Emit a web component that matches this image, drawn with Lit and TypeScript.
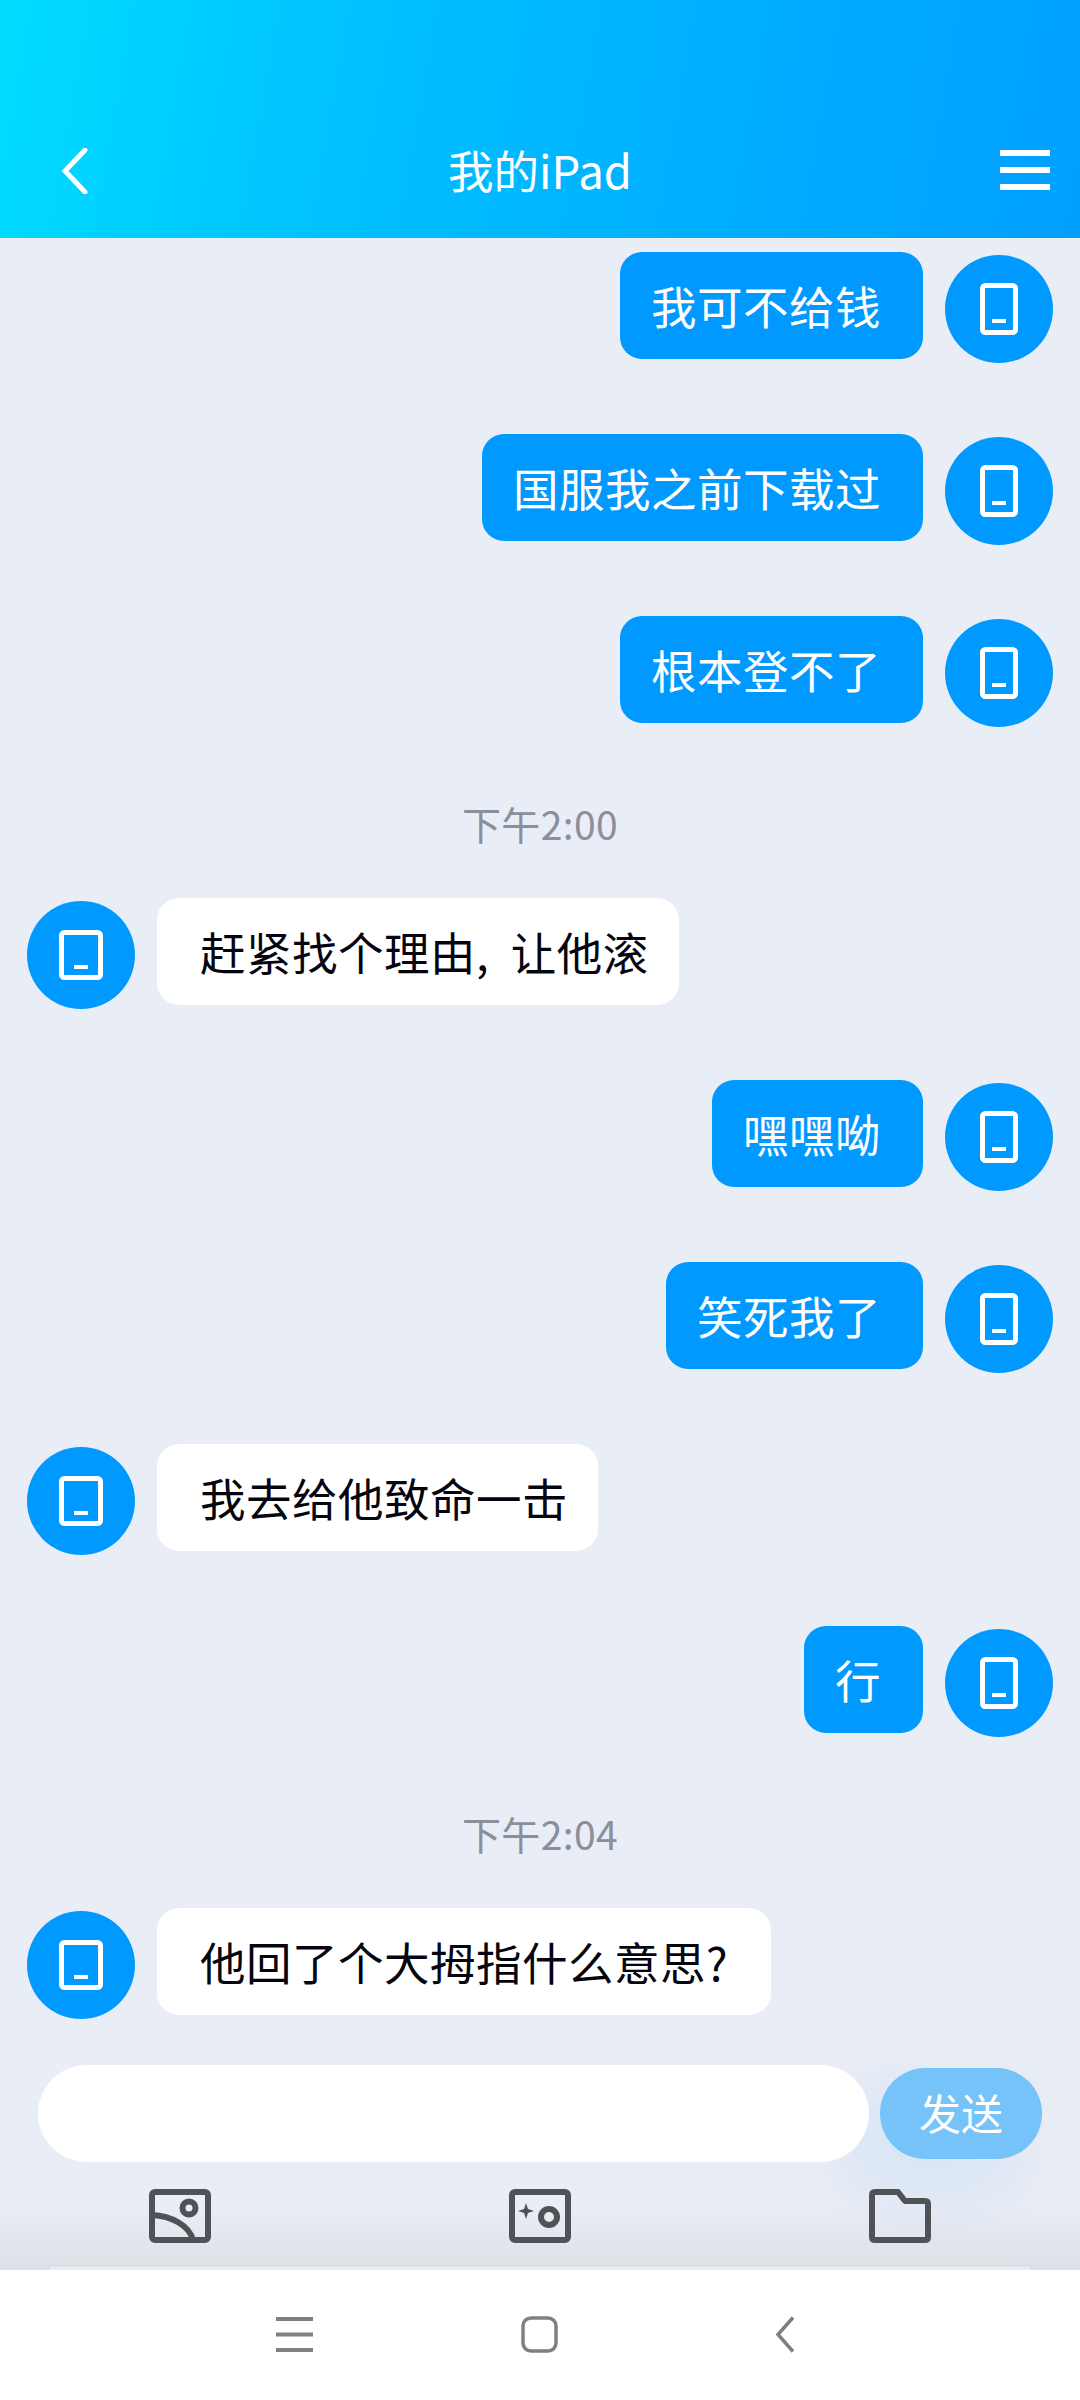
import { LitElement, html, css, svg } from "lit";
import { customElement } from "lit/decorators.js";

type Item = { t: "time" | "me" | "them"; text: string; wide?: number; extra?: number };
const items: Item[] = [
  { t: "me", text: "我可不给钱" },
  { t: "me", text: "国服我之前下载过" },
  { t: "me", text: "根本登不了" },
  { t: "time", text: "下午2:00" },
  { t: "them", text: "赶紧找个理由, 让他滚", wide: 11 },
  { t: "me", text: "嘿嘿呦" },
  { t: "me", text: "笑死我了" },
  { t: "them", text: "我去给他致命一击" },
  { t: "me", text: "行" },
  { t: "time", text: "下午2:04" },
  { t: "them", text: "他回了个大拇指什么意思?", extra: 13 },
];

const phone = svg`<rect x="2.5" y="2.5" width="33" height="47" rx="3" fill="none" stroke="#fff" stroke-width="5"/><rect x="12" y="36" width="14" height="4" fill="#fff"/>`;
const tablet = svg`<rect x="2.5" y="2.5" width="39" height="45" rx="3" fill="none" stroke="#fff" stroke-width="5"/><rect x="15" y="35" width="14" height="4" fill="#fff"/>`;

@customElement("app-root")
export class AppRoot extends LitElement {
  static styles = css`
    :host { display: flex; flex-direction: column; width: 1080px; height: 2400px; background: #e9edf5; overflow: hidden;
      font-family: "Noto Sans CJK SC", "Noto Sans", sans-serif; }
    .head { height: 238px; box-sizing: border-box; padding: 148px 30px 0 61px; display: flex; justify-content: space-between; align-items: flex-start;
      background: linear-gradient(100deg, #00dcff 0%, #00bcff 40%, #009fff 100%); position: relative; flex: none; }
    .title { position: absolute; left: 0; right: 0; top: 139px; text-align: center; color: #fff; font-size: 45.5px; line-height: 60px; }
    .back { width: 28px; height: 46px; display: block; }
    .menu { width: 50px; height: 42px; display: block; }
    .list { flex: 1; min-height: 0; padding: 14px 27px 0; overflow: hidden; }
    .row { display: flex; gap: 22px; align-items: flex-start; margin-bottom: 71px; }
    .row.me { justify-content: flex-end; }
    .avatar { width: 108px; height: 108px; margin-top: 3px; border-radius: 50%; background: #0099ff; display: flex; align-items: center; justify-content: center; flex: none; }
    .bubble { height: 107px; box-sizing: border-box; border-radius: 22px; font-size: 45.5px; letter-spacing: .5px; line-height: 107px; white-space: nowrap; }
    .me .bubble { background: #0099ff; color: #fff; padding: 0 42px 0 31px; }
    .them .bubble { background: #fff; color: #05050f; padding: 0 30px 0 43px; }
    .time { height: 57px; margin-bottom: 43px; text-align: center; color: #8a8f9c; font-size: 39px; line-height: 51px; letter-spacing: .4px; }
    .composer { flex: none; height: 205px; box-sizing: border-box; padding: 0 38px; display: grid; grid-template-columns: 831px 162px; column-gap: 11px; align-content: start; align-items: center; position: relative;
      background: linear-gradient(180deg, #e9edf5 0%, #e9edf5 70%, #dde0e7 97%); }
    .composer::after { content: ""; position: absolute; left: 50px; right: 50px; bottom: 0; height: 3px; background: #eaecf0; }
    .input { height: 97px; border-radius: 49px; background: #fff; position: relative; z-index: 1; }
    .send { height: 91px; border-radius: 46px; background: #75c3f8; color: #fff; font-size: 42px; text-align: center; line-height: 88px;
      box-shadow: -30px 30px 60px 10px rgba(0, 140, 255, .07); }
    .tools { grid-column: 1 / -1; display: flex; justify-content: space-between; padding: 27px 111px 0; }
    .tools svg { width: 62px; height: 54px; display: block; }
    .nav { flex: none; height: 130px; background: #fff; padding-top: 46px; box-sizing: border-box; }
    .navrow { display: flex; margin-left: 276px; align-items: center; }
    .n1 { width: 37px; height: 37px; display: block; }
    .n2 { width: 37px; height: 37px; display: block; margin-left: 208px; }
    .n3 { width: 20px; height: 37px; display: block; margin-left: 217px; }
  `;

  private msg(it: Item) {
    if (it.t === "time") return html`<div class="time">${it.text}</div>`;
    const av = html`<div class="avatar">
      ${it.t === "me"
        ? html`<svg width="38" height="52" viewBox="0 0 38 52">${phone}</svg>`
        : html`<svg width="44" height="50" viewBox="0 0 44 50">${tablet}</svg>`}
    </div>`;
    const bs = `${it.wide ? `word-spacing:${it.wide}px;` : ""}${it.extra ? `padding-right:${30 + it.extra}px;` : ""}`;
    const b = html`<div class="bubble" style=${bs}>${it.text}</div>`;
    return it.t === "me"
      ? html`<div class="row me">${b}${av}</div>`
      : html`<div class="row them">${av}${b}</div>`;
  }

  render() {
    const st = "fill:none;stroke:#505256;stroke-width:6;stroke-linejoin:round";
    return html`
      <div class="head">
        <svg class="back" viewBox="0 0 28 46"><path d="M24 2 L4 23 L24 44" fill="none" stroke="#fff" stroke-width="5" stroke-linecap="round" stroke-linejoin="miter"/></svg>
        <div class="title">我的iPad</div>
        <svg class="menu" viewBox="0 0 50 42"><path d="M0 5H50M0 22H50M0 39H50" stroke="#fff" stroke-width="6" fill="none"/></svg>
      </div>
      <div class="list">${items.map((i) => this.msg(i))}</div>
      <div class="composer">
        <div class="input"></div>
        <div class="send">发送</div>
        <div class="tools">
          <svg viewBox="0 0 62 54"><rect x="3" y="3" width="56" height="48" rx="3" style=${st}/><circle cx="40" cy="19" r="6.5" style=${st}/><path d="M3 26 C22 27 40 36 44 51" style=${st}/></svg>
          <svg viewBox="0 0 62 54"><rect x="3" y="3" width="56" height="48" rx="3" style=${st}/><circle cx="40" cy="28" r="8" style=${st}/><path d="M17 14 L19 20 L25 22 L19 24 L17 30 L15 24 L9 22 L15 20 Z" fill="#505256"/></svg>
          <svg viewBox="0 0 62 54"><path d="M3 6 Q3 3 6 3 H29 L36 12 H56 Q59 12 59 15 V48 Q59 51 56 51 H6 Q3 51 3 48 Z" style=${st}/></svg>
        </div>
      </div>
      <div class="nav">
        <div class="navrow">
          <svg class="n1" viewBox="0 0 37 37"><path d="M0 3H37M0 18.5H37M0 34H37" stroke="#808080" stroke-width="4" fill="none"/></svg>
          <svg class="n2" viewBox="0 0 37 37"><rect x="2" y="2" width="33" height="33" rx="8" fill="none" stroke="#808080" stroke-width="3.5"/></svg>
          <svg class="n3" viewBox="0 0 20 37"><path d="M18 1.5 L3 18.5 L18 35.5" fill="none" stroke="#808080" stroke-width="3.5"/></svg>
        </div>
      </div>
    `;
  }
}
